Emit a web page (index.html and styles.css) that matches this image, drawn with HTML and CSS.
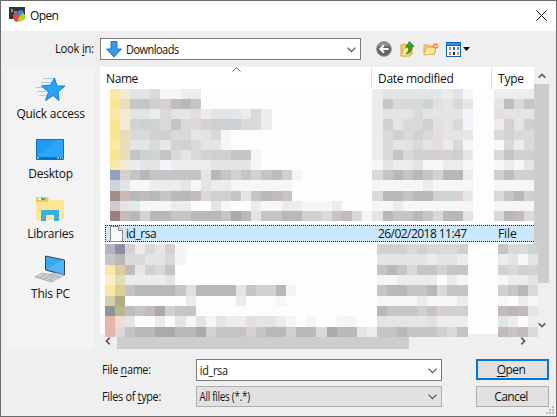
FILE: index.html
```
<!DOCTYPE html>
<html lang="en">
<head>
<meta charset="utf-8">
<title>Open</title>
<link rel="stylesheet" href="styles.css">
</head>
<body>
<div class="dialog">
  <header class="titlebar">
    <svg class="app-icon" width="17" height="16" viewBox="0 0 17 16"><path fill="#303437" d="M0 0h16v12H0z"/><path d="M2 2l2 1.5L2 5M5 5h3" fill="none" stroke="#ddd"/><path fill="#4b83e8" d="M9 4l4-1 2 3-4 4-3-3z"/><path fill="#e64a3c" d="M4 7l3-1 4 4-1 4-3 1-3-3z"/><path fill="#a5dc20" d="M10 10l4-4 2 2v4l-5 3-2-2z"/></svg>
    <span class="title">Open</span>
    <svg class="close" width="11" height="11" viewBox="0 0 11 11"><path d="M.5.5l10 10M10.5.5l-10 10" stroke="#111" fill="none"/></svg>
  </header>

  <div class="toolbar">
    <span class="look-label"><span class="narrow">Look <u>i</u>n:</span></span>
    <div class="combo look">
      <svg width="16" height="17" viewBox="0 0 16 17"><path d="M5 .5h6V8h4.5L8 16 .5 8H5z" fill="#3b98e8" stroke="#2079bd"/></svg>
      <span class="look-value narrow">Downloads</span>
      <svg class="chev" width="9" height="6" viewBox="0 0 9 6"><path d="M.5.7l4 4 4-4"/></svg>
    </div>
    <div class="tools">
      <svg width="16" height="16" viewBox="0 0 16 16"><circle cx="8" cy="8" r="7.3" fill="#636363" stroke="#8d8d8d"/><path d="M2 6a6.2 6.2 0 0 1 12 0q-6-3-12 0" fill="#929292"/><path d="M12.5 8H4.5M8 4.3L4.3 8 8 11.7" stroke="#fff" stroke-width="2" fill="none"/></svg>
      <svg width="15" height="16" viewBox="0 0 15 16"><path d="M1 4l4-1 1 1 6 0v9l-3 2H1z" fill="#f0cf63" stroke="#d6ab35"/><path d="M1 15l3-8 9-1-4 9z" fill="#fae99c" stroke="#dfb744"/><path d="M6 13q4-3 2.5-7H5.8L9.5.7 14 5.5h-2.5q1 6-5.500 7.500z" fill="#38a52b" stroke="#177a18" stroke-width=".8"/></svg>
      <svg width="16" height="14" viewBox="0 0 16 14"><path d="M1 3h4l1 1h6v8H1z" fill="#efcf69" stroke="#d9ae3b"/><path d="M1 13l2-7 10-1-2 7z" fill="#fbe9a3" stroke="#e2bd57"/><path d="M12.500 1v6M9.500 4h6M10.400 1.900l4.200 4.200M14.600 1.900L10.400 6.100" stroke="#f17448" stroke-width="1.200"/><circle cx="12.500" cy="4" r="1.200" fill="#ffe0a8"/></svg>
      <svg width="24" height="15" viewBox="0 0 24 15"><path fill="#0b65bd" d="M0 0h15v15H0z"/><path fill="#3293ee" d="M1 1h13v2H1z"/><path fill="#fff" d="M1 4h13v10H1z"/><path fill="#9b91bd" d="M3 5h2v3H3z"/><path fill="#355ca8" d="M7 5h2v3H7z"/><path fill="#49a958" d="M11 5h2v3h-2z"/><path fill="#ef7e6d" d="M3 10h2v3H3z"/><path fill="#162970" d="M7 10h2v3H7z"/><path fill="#c59b23" d="M11 10h2v3h-2z"/><path fill="#111" d="M17 5h7l-3.500 4z"/></svg>
    </div>
  </div>

  <div class="browser">
    <nav class="places">
      <div class="place"><svg width="29" height="25" viewBox="0 0 29 25"><path d="M7 1.500h11M5 5.500h10M1 14.500h9M3 18.500h8M0 10.500h9" stroke="#8cc9ee" opacity=".8"/><path d="M18.500 1l2.500 8h8l-7 6 1 8.500-6-5-7.500 5 3-8.500L5.500 9l9-1z" fill="#27a5f5" stroke="#147fc4"/></svg><span>Quick access</span></div>
      <div class="place"><svg width="28" height="21" viewBox="0 0 28 21"><path d="M.5.5h27v20H.5z" fill="#1b9cf7" stroke="#0875bd"/><path d="M1 18L20 1h7v17z" fill="#43aefb" opacity=".5"/><path d="M1 18h26v2H1z" fill="#0874bd"/><path d="M1 19h2M21 19h2M24 19h1M26 19h1" stroke="#fff"/></svg><span>Desktop</span></div>
      <div class="place"><svg width="28" height="24" viewBox="0 0 28 24"><path d="M0 1h11l2 2h15v20H0z" fill="#ffe596"/><path d="M0 0h11l2 2-2 3H0z" fill="#f8c937"/><path d="M2 1h4v2H2z" fill="#fff"/><path d="M5 1h4v2H5z" fill="#36a9dc"/><path d="M5 24V13h18v11h-5v-6h-8v6z" fill="#37b0e6"/></svg><span>Libraries</span></div>
      <div class="place"><svg width="31" height="28" viewBox="0 0 31 28"><path d="M10.500 1l19 4v15l-19-5z" fill="#36a8f6" stroke="#39464f"/><path d="M12 14L27 5l2 .5V19z" fill="#69c1fc" opacity=".5"/><path d="M15 19l6-1 8 2-6 4-9-2z" fill="#cbd0d4" stroke="#989fa5" stroke-width=".6"/><path d="M0 22l7-4 17 4-7 5z" fill="#d8dcdf" stroke="#8e969c" stroke-width=".7"/><path d="M3 21.500l15 4M6 20l14 3.500M5 23l6-4M9 24.500l6-4M14 25.500l6-4" stroke="#949ca3" stroke-width=".6"/></svg><span>This PC</span></div>
    </nav>

    <div class="files">
      <div class="list-area">
        <div class="list">
          <div class="columns"><span class="col name">Name<svg class="sort" width="9" height="5" viewBox="0 0 9 5"><path d="M.5 4.500l4-4 4 4"/></svg></span><span class="col date">Date modified</span><span class="col type">Type</span></div>
          <svg class="mosaic top" id="rows-above" preserveAspectRatio="none"></svg>
          <div class="row">
            <svg width="13" height="16" viewBox="0 0 13 16"><path d="M.5.5h8l4 4v11H.5z" fill="#fafafa" stroke="#8c8c8c"/><path d="M8.500.5v4h4" fill="#ddd" stroke="#8c8c8c"/></svg>
            <span class="r-name">id_rsa</span><span class="r-date">26/02/2018 11:47</span><span class="r-type">File</span>
          </div>
          <svg class="mosaic bottom" id="rows-below" preserveAspectRatio="none"></svg>
        </div>
        <div class="vscroll">
          <svg width="8" height="6" viewBox="0 0 8 6"><path d="M.7 4.700L4 1.400l3.300 3.300"/></svg>
          <div class="vthumb"></div>
          <svg width="8" height="6" viewBox="0 0 8 6"><path d="M.7 1.300L4 4.600l3.300-3.300"/></svg>
        </div>
      </div>
      <div class="hscroll">
        <svg width="6" height="8" viewBox="0 0 6 8"><path d="M4.700.7L1.400 4l3.300 3.300"/></svg>
        <div class="hthumb"></div>
        <svg width="6" height="8" viewBox="0 0 6 8"><path d="M1.300.7L4.600 4 1.300 7.300"/></svg>
      </div>
    </div>
  </div>

  <div class="fields">
    <label class="fl"><span class="narrow">File <u>n</u>ame:</span></label>
    <div class="combo"><span class="value narrow">id_rsa</span><svg class="chev" width="9" height="6" viewBox="0 0 9 6"><path d="M.5.7l4 4 4-4"/></svg></div>
    <div class="btn primary"><span><u>O</u>pen</span></div>
    <label class="fl"><span class="narrow">Files of <u>t</u>ype:</span></label>
    <div class="combo gray"><span class="value narrow">All files (*.*)</span><svg class="chev" width="9" height="6" viewBox="0 0 9 6"><path d="M.5.7l4 4 4-4"/></svg></div>
    <div class="btn"><span>Cancel</span></div>
  </div>
  <svg class="grip" width="8" height="8" viewBox="0 0 8 8"><path d="M6 0h2v2H6zM3 3h2v2H3zM6 3h2v2H6zM0 6h2v2H0zM3 6h2v2H3zM6 6h2v2H6z" fill="#bcbcbc"/></svg>
</div>
<script src="mosaic.js"></script>
</body>
</html>
```
FILE: styles.css
```
* { box-sizing: border-box; }
body {
  margin: 0;
  font: 12px "Open Sans", "Noto Sans", sans-serif;
  color: #111;
}
svg { display: block; flex: none; }
span, label { white-space: nowrap; }
u { text-decoration-thickness: 1px; text-underline-offset: 2px; }
.narrow {
  display: inline-block;
  letter-spacing: -.3px;
  transform: scaleX(.9);
  transform-origin: left;
}
.dialog {
  position: relative;
  width: 557px;
  height: 417px;
  border: 1px solid #6b696b;
  background: #efefef;
  overflow: hidden;
}
.titlebar {
  display: flex;
  height: 30px;
  padding: 6px 9px 0 8px;
  background: #fff;
}
.title { margin-left: 4px; line-height: 18px; letter-spacing: -.6px; }
.close { margin: 3px 0 0 auto; }
.toolbar { display: flex; height: 36px; padding-top: 7px; }
.look-label { width: 38px; margin-left: 54px; line-height: 22px; }
.look-label .narrow { transform: scaleX(.94); }
.combo {
  display: flex;
  align-items: center;
  height: 22px;
  border: 1px solid #7a7a7a;
  background: #fff;
}
.look { width: 261px; margin-left: 7px; padding-left: 5px; }
.look-value { margin-left: 4px; letter-spacing: -.6px; transform: scaleX(.92); }
.chev { margin: 1px 4px 0 auto; fill: none; stroke: #555; stroke-width: 1.2; }
.tools { display: flex; align-items: center; height: 22px; margin-left: 15px; gap: 8px; }
.tools svg:last-child { margin-left: -1px; }
.browser { display: flex; height: 283px; }
.places {
  width: 87px;
  margin: 0 6px 0 6px;
  padding-top: 11px;
  background: #f3f3f3;
}
.place { display: flex; flex-direction: column; align-items: center; height: 60px; letter-spacing: -.25px; }
.place span { margin-top: auto; line-height: 16px; }
.place:nth-child(1) { height: 44px; }
.place:nth-child(1) svg { margin-top: -1px; }
.place:nth-child(2) svg { margin-top: 17px; margin-left: -1px; }
.place:nth-child(3) svg { margin-top: 15px; margin-left: -1px; }
.place:nth-child(4) svg { margin-top: 13px; margin-left: -1px; }
.files { width: 449px; }
.list-area { display: flex; height: 267px; background: #fdfdfd; }
.list { display: flex; flex-direction: column; width: 434px; background: #fdfdfd; }
.columns { display: flex; height: 22px; background: #fff; }
.col { line-height: 23px; padding-left: 6px; border-right: 1px solid #e3e3e3; }
.name { position: relative; width: 272px; letter-spacing: -.4px; }
.sort { position: absolute; left: 132px; top: 0; fill: none; stroke: #666; }
.date { width: 120px; letter-spacing: -.3px; }
.type { width: 42px; border-right: 0; letter-spacing: -.2px; }
.mosaic { position: relative; z-index: 1; }
.top { width: 424px; height: 132px; margin-left: 10px; }
.row {
  display: flex;
  width: 429px;
  height: 17px;
  margin: 4px 0 2px 5px;
  padding-left: 4px;
  background: #cce8ff;
  border: 1px dotted #222;
  border-right: 0;
  line-height: 16px;
}
.r-name { width: 255px; padding-left: 3px; letter-spacing: -.45px; }
.r-date { width: 120px; letter-spacing: -.55px; }
.r-type { letter-spacing: -.1px; }
.bottom { width: 433px; height: 93px; margin-left: 5px; }
.vscroll {
  display: flex;
  flex-direction: column;
  align-items: center;
  width: 15px;
  height: 267px;
  padding: 6px 0 0;
  background: #efefef;
}
.vscroll svg, .hscroll svg { fill: none; stroke: #606060; stroke-width: 1.8; }
.vthumb { width: 15px; height: 199px; margin: 5px 0 39px; background: #cdcdcd; }
.hscroll { display: flex; height: 16px; padding: 3px 23px 0 5px; background: #efefef; }
.hthumb { width: 292px; height: 15px; margin: -3px auto 0 6px; background: #cdcdcd; }
.fields {
  display: grid;
  grid-template-columns: 94px 246px 107px;
  grid-template-rows: 22px 21px;
  row-gap: 5px;
  margin: 9px 0 0 101px;
}
.fields .combo { height: 100%; }
.fields .combo.gray { background: #e1e1e1; border-color: #adadad; }
.fl { line-height: 22px; }
.value { padding-left: 3px; }
.gray .value { transform: scaleX(.82); }
.btn {
  display: flex;
  align-items: center;
  justify-content: center;
  margin-left: 34px;
  width: 73px;
  height: 21px;
  border: 1px solid #adadad;
  background: #e1e1e1;
  letter-spacing: -.6px;
}
.btn span { margin-right: 3px; }
.primary { border: 2px solid #0078d7; }
.grip { position: absolute; right: 2px; bottom: 2px; }
```
FILE: mosaic.js
```
const palette = {
  a: '#f6f6f6', b: '#ececec', c: '#e3e4e5', d: '#d9d9da', e: '#cfd0d1', f: '#c5c4c6',
  g: '#b8b7b9', h: '#aaaaac', p: '#d6d0d0', q: '#e5dee0', r: '#ced3d3', s: '#c2babd',
  t: '#e3e7ea', u: '#f3f5f9',
  Y: '#fae391', y: '#fae8a5', w: '#f3ead2', v: '#eadcb7', B: '#8fa4c1', L: '#cdd4de',
  M: '#a38e8e', N: '#d2cacb', O: '#ccb9b7', P: '#9c7f80', A: '#b3b2c8', C: '#8e8ea8',
  D: '#dccf9c', E: '#e3ddb4', x: '#f9efcb', F: '#d4cfb3', G: '#b0ac86', H: '#929396',
  I: '#b6b78f', J: '#e7b6ab', K: '#efdcd5'
};

// Each row: name column, date column, type column.
const above = [
  ['ywccduubb', 'bccccctbca', 'bbbb'],
  ['Yvffepsgf', 'bfdddrqcdt', 'csdf'],
  ['ywccbdctqbcctbdb', 'bcccdccccu', 'qccc'],
  ['Ywperdfddpeeeddb', 'becddeqcdu', 'bpce'],
  ['Yvddeeddtcda', 'bdedpdqcct', 'dpdd'],
  ['yvccdtpedcca', 'bdccdcqbda', 'adbd'],
  ['Yvferfdcdpeeffu', 'bdfdpepret', 'dfee'],
  ['ywbccubbbbccccu', 'acbbcaabba', 'abac'],
  ['Bpfgfffffcgfrfpfseu', 'dfgfgfpggb', 'esee'],
  ['Lcaabbbcacbbaaaaaa', 'aaaaabaaaa', 'aaaa'],
  ['MOgsgfggsdeefcfgsf', 'dggfggprpt', 'dfge'],
  ['Nctaaabb..ca..baabbaaab', 'aabaaaaaaa', 'aaua'],
  ['POgpggffgggfhgcffggeedfsdu', 'cgffgfdggc', 'dgsd']
];
const below = [
  ['ACpbdcpu', 'eeededdde', 'fddr'],
  ['fgddccdu', 'cccccbccb', 'bcac'],
  ['yDstedf', 'fgfdffpff', 'pdep'],
  ['xEbbbbc', 'aabbbb.ba', 'abbc'],
  ['yDfggggfqggggcfeegu', 'fggffgdff', 'efgd'],
  ['FG......b....b...a', 'aaaabaaab', 'a.ba'],
  ['HIsfsheff', 'gfffefpee', 'sgsc'],
  ['JKc..b.cacacbbqccbu.a..au', 'cccccqbbb', 'cb.b'],
  ['Jdfgghhgghrfffpfggeggdhggcb', 'ffgfffedf', 'sfsd']
];

function draw(id, rows, columns, starts) {
  const svg = document.getElementById(id);
  svg.setAttribute('viewBox', `0 0 ${columns} ${rows.length}`);
  svg.setAttribute('shape-rendering', 'crispEdges');
  rows.forEach((parts, y) => parts.forEach((part, i) => [...part].forEach((key, k) => {
    if (!palette[key]) return;
    const cell = document.createElementNS('http://www.w3.org/2000/svg', 'rect');
    cell.setAttribute('x', starts[i] + k);
    cell.setAttribute('y', y);
    cell.setAttribute('width', 1);
    cell.setAttribute('height', 1);
    cell.setAttribute('fill', palette[key]);
    svg.append(cell);
  })));
}
draw('rows-above', above, 42, [0, 26, 38]);
draw('rows-below', below, 43, [0, 27, 39]);
```
